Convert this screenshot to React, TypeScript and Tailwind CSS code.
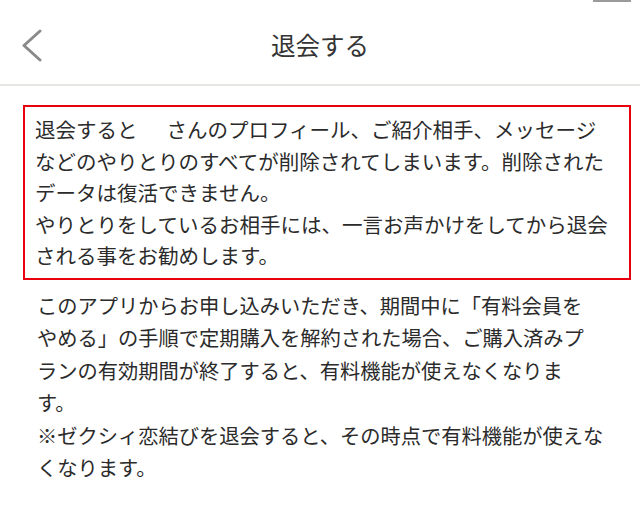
import React from "react";

const boxLines = [
  null,
  "などのやりとりのすべてが削除されてしまいます。削除された",
  "データは復活できません。",
  "やりとりをしているお相手には、一言お声かけをしてから退会",
  "される事をお勧めします。",
];

const noteLines = [
  "このアプリからお申し込みいただき、期間中に「有料会員を",
  "やめる」の手順で定期購入を解約された場合、ご購入済みプ",
  "ランの有効期間が終了すると、有料機能が使えなくなりま",
  "す。",
  "※ゼクシィ恋結びを退会すると、その時点で有料機能が使えな",
  "くなります。",
];

export default function App() {
  return (
    <div
      className="w-[640px] h-[523px] bg-white overflow-hidden text-[#333]"
      style={{ fontFamily: '"Noto Sans CJK JP", "Noto Sans", sans-serif' }}
    >
      <header className="relative flex items-center h-[86px] pt-[7px] border-b-2 border-[#e6e6e3]">
        <div className="absolute top-0 left-[593px] w-[38px] h-[2px] bg-[#9a9a9a]" />
        <div className="w-[72px] pl-[22px] flex items-center">
          <svg width="20" height="33" viewBox="0 0 20 33" fill="none">
            <polyline
              points="18,2 2,16.5 18,31"
              stroke="#8a8a8a"
              strokeWidth="3"
              strokeLinecap="round"
              strokeLinejoin="round"
            />
          </svg>
        </div>
        <h1 className="flex-1 text-center text-[24.5px] leading-none text-[#333] tracking-normal">
          退会する
        </h1>
        <div className="w-[72px]" />
      </header>

      <div className="ml-[23px] mt-[19px] w-[608px] border-2 border-[#e8000e] pl-[10px] pr-[4px] pt-[7px] pb-[6px] text-[20.5px] leading-[31.5px] text-[#2b2b2b]">
        {boxLines.map((l, i) =>
          l === null ? (
            <div key={i} className="whitespace-nowrap">
              退会すると<span className="inline-block w-[29px]" />さんのプロフィール、ご紹介相手、メッセージ
            </div>
          ) : (
            <div key={i} className="whitespace-nowrap">
              {l}
            </div>
          )
        )}
      </div>

      <div className="pl-[37px] mt-[10px] text-[20.25px] leading-[32.5px] text-[#2b2b2b]">
        {noteLines.map((l, i) => (
          <div key={i} className="whitespace-nowrap">
            {l}
          </div>
        ))}
      </div>
    </div>
  );
}
